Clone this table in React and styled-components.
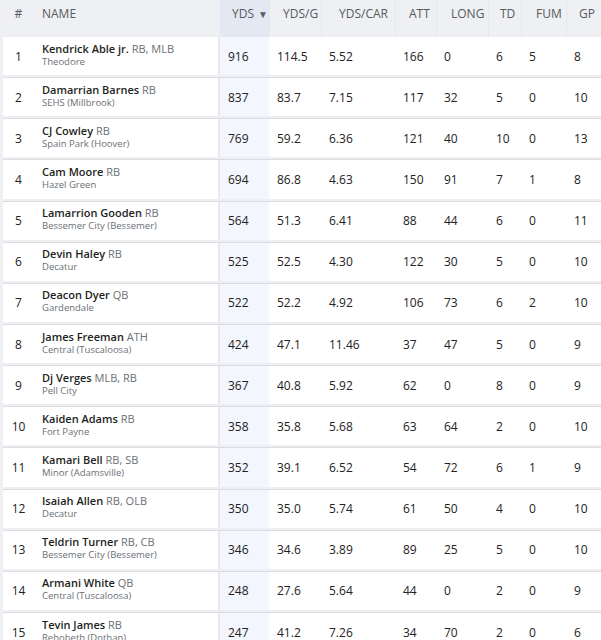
import React from 'react';
import styled, { createGlobalStyle } from 'styled-components';

const GlobalStyle = createGlobalStyle`
  html, body {
    margin: 0;
    padding: 0;
    background: #eff0f3;
  }
  body {
    font-family: "Open Sans", "Liberation Sans", Arial, sans-serif;
    color: #222;
  }
`;

const COLS = '31px 186px 49px 52px 74px 41px 52px 33px 45px 35px';

const columns = [
  { key: 'yds', label: 'YDS', pad: 12, sorted: true },
  { key: 'ypg', label: 'YDS/G', pad: 13 },
  { key: 'ypc', label: 'YDS/CAR', pad: 17 },
  { key: 'att', label: 'ATT', pad: 13 },
  { key: 'long', label: 'LONG', pad: 14 },
  { key: 'td', label: 'TD', pad: 11 },
  { key: 'fum', label: 'FUM', pad: 14 },
  { key: 'gp', label: 'GP', pad: 12 },
];

const players = [
  ['Kendrick Able jr.', 'RB, MLB', 'Theodore', '916', '114.5', '5.52', '166', '0', '6', '5', '8'],
  ['Damarrian Barnes', 'RB', 'SEHS (Millbrook)', '837', '83.7', '7.15', '117', '32', '5', '0', '10'],
  ['CJ Cowley', 'RB', 'Spain Park (Hoover)', '769', '59.2', '6.36', '121', '40', '10', '0', '13'],
  ['Cam Moore', 'RB', 'Hazel Green', '694', '86.8', '4.63', '150', '91', '7', '1', '8'],
  ['Lamarrion Gooden', 'RB', 'Bessemer City (Bessemer)', '564', '51.3', '6.41', '88', '44', '6', '0', '11'],
  ['Devin Haley', 'RB', 'Decatur', '525', '52.5', '4.30', '122', '30', '5', '0', '10'],
  ['Deacon Dyer', 'QB', 'Gardendale', '522', '52.2', '4.92', '106', '73', '6', '2', '10'],
  ['James Freeman', 'ATH', 'Central (Tuscaloosa)', '424', '47.1', '11.46', '37', '47', '5', '0', '9'],
  ['Dj Verges', 'MLB, RB', 'Pell City', '367', '40.8', '5.92', '62', '0', '8', '0', '9'],
  ['Kaiden Adams', 'RB', 'Fort Payne', '358', '35.8', '5.68', '63', '64', '2', '0', '10'],
  ['Kamari Bell', 'RB, SB', 'Minor (Adamsville)', '352', '39.1', '6.52', '54', '72', '6', '1', '9'],
  ['Isaiah Allen', 'RB, OLB', 'Decatur', '350', '35.0', '5.74', '61', '50', '4', '0', '10'],
  ['Teldrin Turner', 'RB, CB', 'Bessemer City (Bessemer)', '346', '34.6', '3.89', '89', '25', '5', '0', '10'],
  ['Armani White', 'QB', 'Central (Tuscaloosa)', '248', '27.6', '5.64', '44', '0', '2', '0', '9'],
  ['Tevin James', 'RB', 'Rehobeth (Dothan)', '247', '41.2', '7.26', '34', '70', '2', '0', '6'],
];

const Table = styled.div`
  width: 601px;
  overflow: hidden;
`;

const HeaderRow = styled.div`
  display: grid;
  grid-template-columns: ${COLS};
  height: 37px;
  padding-left: 3px;
  background: #eff0f3;
`;

const HeadCell = styled.div`
  display: flex;
  align-items: flex-start;
  padding-top: 6px;
  padding-left: ${({ $pad }) => $pad}px;
  font-size: 12px;
  line-height: 16px;
  color: #555a60;
  text-transform: uppercase;
  white-space: nowrap;
  background: ${({ $active }) => ($active ? '#e3e8f3' : 'transparent')};
  border-left: ${({ $divider }) => ($divider ? '1px solid #e6e7ea' : 'none')};
`;

const RankHead = styled(HeadCell)`
  justify-content: center;
  padding-left: 0;
`;

const SortArrow = styled.span`
  font-size: 10px;
  margin-left: 4px;
  color: #5a5f66;
`;

const Body = styled.div`
  padding-left: 3px;
`;

const Row = styled.div`
  display: grid;
  grid-template-columns: ${COLS};
  height: 41.15px;
  box-sizing: border-box;
  background: #fff;
  border-bottom: 1px solid #dcdde1;
  box-shadow: inset 0 -2px 0 #eeeff2;
  padding-bottom: 2px;
`;

const Rank = styled.div`
  display: flex;
  align-items: center;
  justify-content: center;
  font-size: 12px;
  color: #222;
`;

const NameCell = styled.div`
  display: flex;
  flex-direction: column;
  justify-content: center;
  padding-left: 8px;
  padding-bottom: 4px;
  border-right: 2px solid #e8e9ec;
  white-space: nowrap;
  overflow: hidden;
`;

const Name = styled.div`
  font-size: 11px;
  font-weight: 600;
  line-height: 15px;
  color: #1e1f22;
`;

const Position = styled.span`
  font-weight: 400;
  color: #6b6f75;
`;

const School = styled.div`
  font-size: 9.5px;
  line-height: 12px;
  color: #6b6f75;
`;

const StatCell = styled.div`
  display: flex;
  align-items: center;
  padding-left: 8px;
  font-size: 12px;
  color: #222;
  background: ${({ $active }) => ($active ? '#f3f6fc' : 'transparent')};
`;

export default function App() {
  return (
    <>
      <GlobalStyle />
      <Table>
        <HeaderRow>
          <RankHead>#</RankHead>
          <HeadCell $pad={8}>Name</HeadCell>
          {columns.map((c, i) => (
            <HeadCell key={c.key} $pad={c.pad} $active={c.sorted} $divider={i > 0}>
              {c.label}
              {c.sorted && <SortArrow>▼</SortArrow>}
            </HeadCell>
          ))}
        </HeaderRow>
        <Body>
          {players.map(([name, pos, school, ...stats], i) => (
            <Row key={name}>
              <Rank>{i + 1}</Rank>
              <NameCell>
                <Name>
                  {name} <Position>{pos}</Position>
                </Name>
                <School>{school}</School>
              </NameCell>
              {stats.map((s, j) => (
                <StatCell key={columns[j].key} $active={columns[j].sorted}>
                  {s}
                </StatCell>
              ))}
            </Row>
          ))}
        </Body>
      </Table>
    </>
  );
}
